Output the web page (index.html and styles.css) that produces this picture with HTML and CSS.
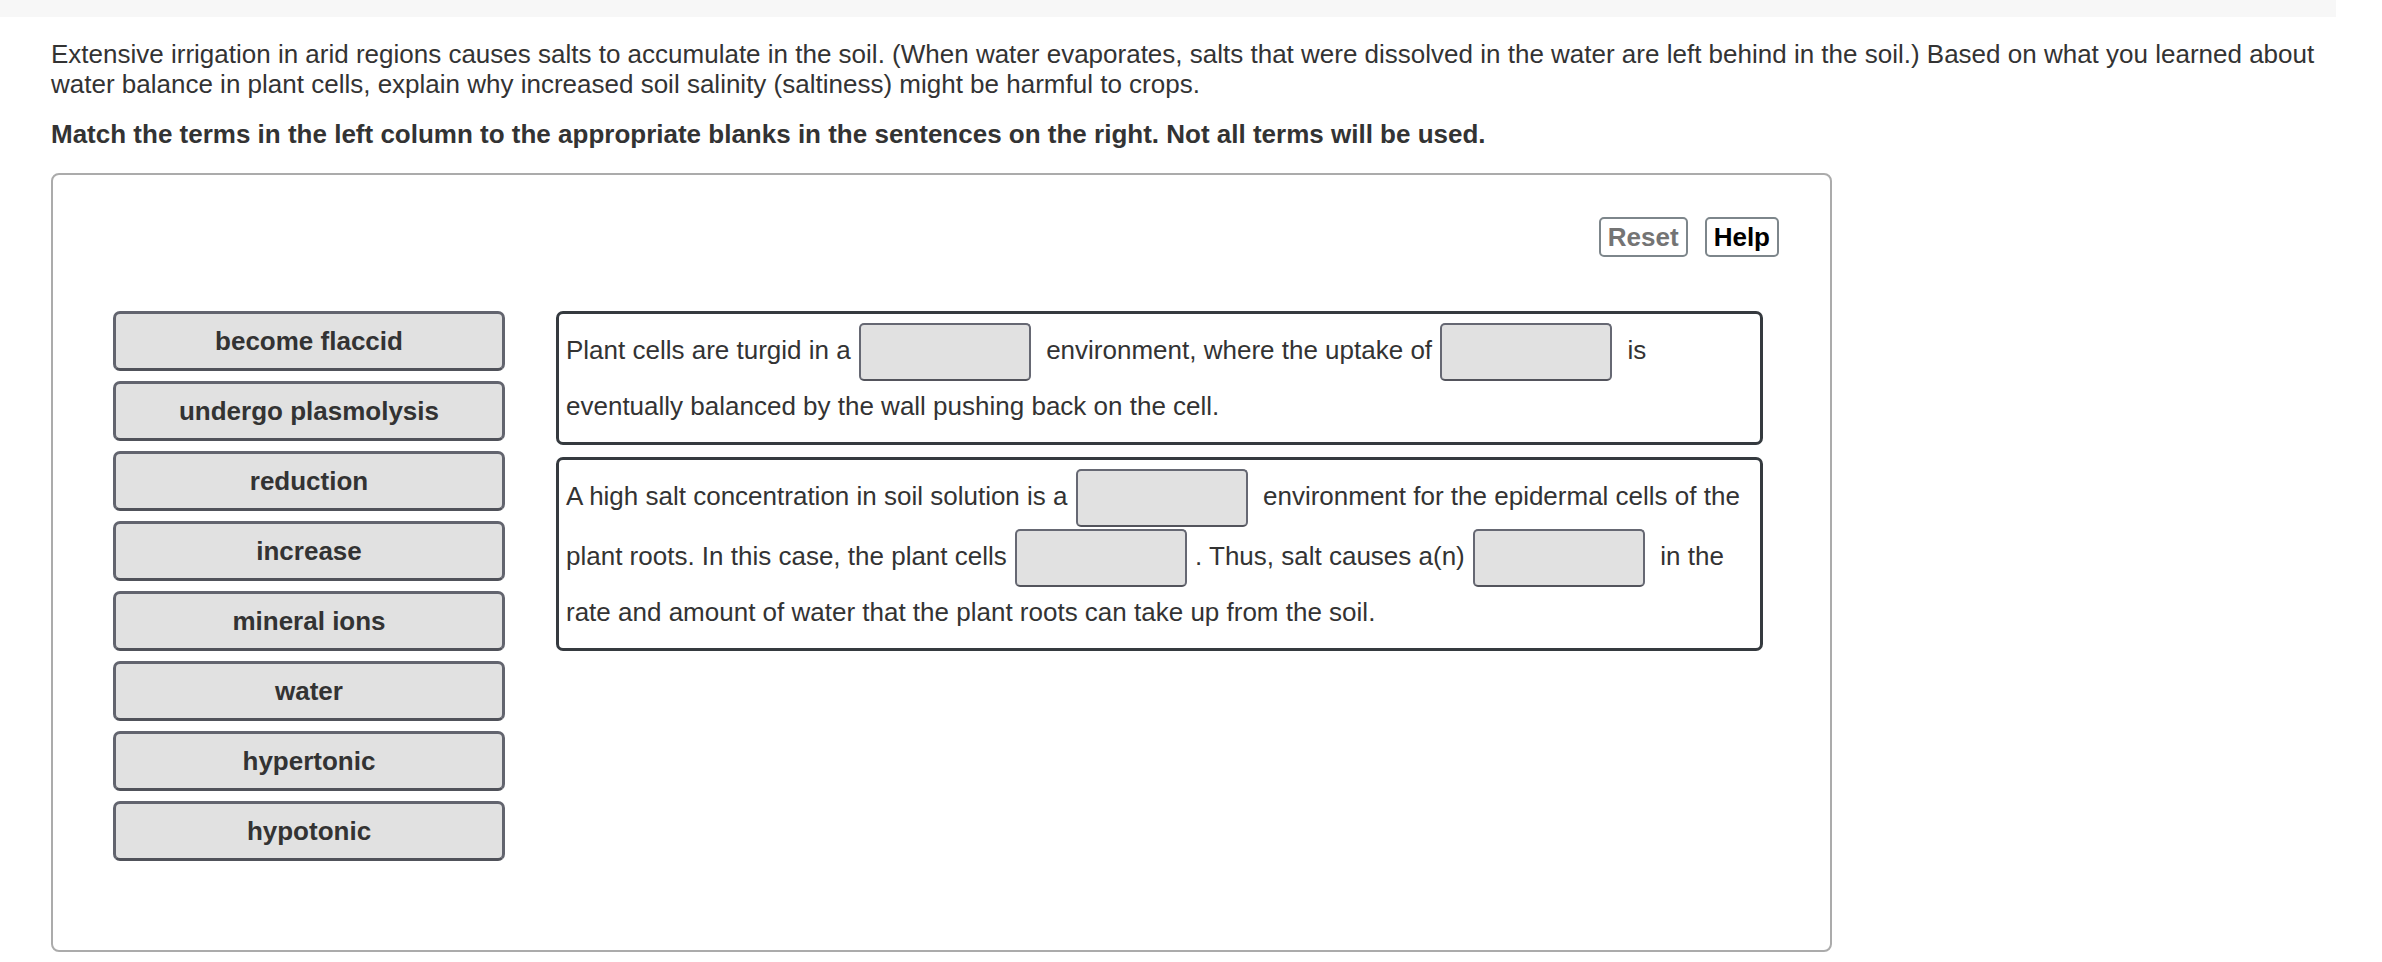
FILE: index.html
```html
<!DOCTYPE html>
<html lang="en">
<head>
<meta charset="utf-8">
<title>Match terms</title>
<link rel="stylesheet" href="styles.css">
</head>
<body>
<div class="topbar"></div>
<div class="question">
  <p class="prompt">Extensive irrigation in arid regions causes salts to accumulate in the soil. (When water evaporates, salts that were dissolved in the water are left behind in the soil.) Based on what you learned about water balance in plant cells, explain why increased soil salinity (saltiness) might be harmful to crops.</p>
  <p class="instr">Match the terms in the left column to the appropriate blanks in the sentences on the right. Not all terms will be used.</p>
  <div class="panel">
    <div class="toolbar">
      <button class="btn btn-reset">Reset</button>
      <button class="btn btn-help">Help</button>
    </div>
    <div class="work">
      <div class="terms">
        <div class="tile">become flaccid</div>
        <div class="tile">undergo plasmolysis</div>
        <div class="tile">reduction</div>
        <div class="tile">increase</div>
        <div class="tile">mineral ions</div>
        <div class="tile">water</div>
        <div class="tile">hypertonic</div>
        <div class="tile">hypotonic</div>
      </div>
      <div class="sentences">
        <div class="sentence">Plant cells are turgid in a <span class="blank"></span> environment, where the uptake of <span class="blank"></span> is eventually balanced by the wall pushing back on the cell.</div>
        <div class="sentence">A high salt concentration in soil solution is a <span class="blank"></span> environment for the epidermal cells of the plant roots. In this case, the plant cells <span class="blank"></span>. Thus, salt causes a(n) <span class="blank"></span> in the rate and amount of water that the plant roots can take up from the soil.</div>
      </div>
    </div>
  </div>
</div>
</body>
</html>
```
FILE: styles.css
```css
html, body {
  margin: 0;
  padding: 0;
  background: #ffffff;
}
body {
  font-family: "Liberation Sans", Arial, Helvetica, sans-serif;
  color: #333333;
  width: 2382px;
}
.topbar {
  width: 2336px;
  height: 17px;
  background: #f7f7f7;
}
.question {
  padding: 0 46px 0 51px;
}
.prompt {
  margin: 22px 0 0 0;
  font-size: 26px;
  line-height: 30px;
}
.instr {
  margin: 20px 0 0 0;
  font-size: 26px;
  line-height: 30px;
  font-weight: bold;
}
.panel {
  box-sizing: border-box;
  width: 1781px;
  height: 779px;
  margin-top: 24px;
  border: 2px solid #ababab;
  border-radius: 8px;
  padding: 42px 51px 0 60px;
}
.toolbar {
  display: flex;
  justify-content: flex-end;
  gap: 17px;
  height: 40px;
}
.btn {
  box-sizing: border-box;
  height: 40px;
  padding: 0 7px;
  background: #ffffff;
  border: 2px solid #7d868b;
  border-radius: 5px;
  font-family: "Liberation Sans", Arial, Helvetica, sans-serif;
  font-size: 26px;
  font-weight: bold;
  line-height: 34px;
}
.btn-reset { color: #747474; }
.btn-help { color: #000000; }
.work {
  display: flex;
  align-items: flex-start;
  gap: 51px;
  margin-top: 54px;
}
.terms {
  display: flex;
  flex-direction: column;
  gap: 10px;
  width: 392px;
}
.tile {
  box-sizing: border-box;
  height: 60px;
  background: #e1e1e1;
  border: 3px solid #62646e;
  border-bottom-color: #50525a;
  border-radius: 7px;
  font-size: 26px;
  font-weight: bold;
  line-height: 55px;
  text-align: center;
  color: #333333;
}
.sentences {
  display: flex;
  flex-direction: column;
  gap: 12px;
  width: 1207px;
}
.sentence {
  box-sizing: border-box;
  border: 3px solid #353a3f;
  border-radius: 7px;
  padding: 8px 9px 12px 7px;
  font-size: 26px;
  line-height: 48px;
  color: #333333;
}
.blank {
  display: inline-block;
  box-sizing: border-box;
  width: 172px;
  height: 58px;
  margin: 1px 8px 1px 1px;
  vertical-align: middle;
  background: #e1e1e1;
  border: 2px solid #666873;
  border-bottom-color: #53545c;
  border-radius: 5px;
}
```
